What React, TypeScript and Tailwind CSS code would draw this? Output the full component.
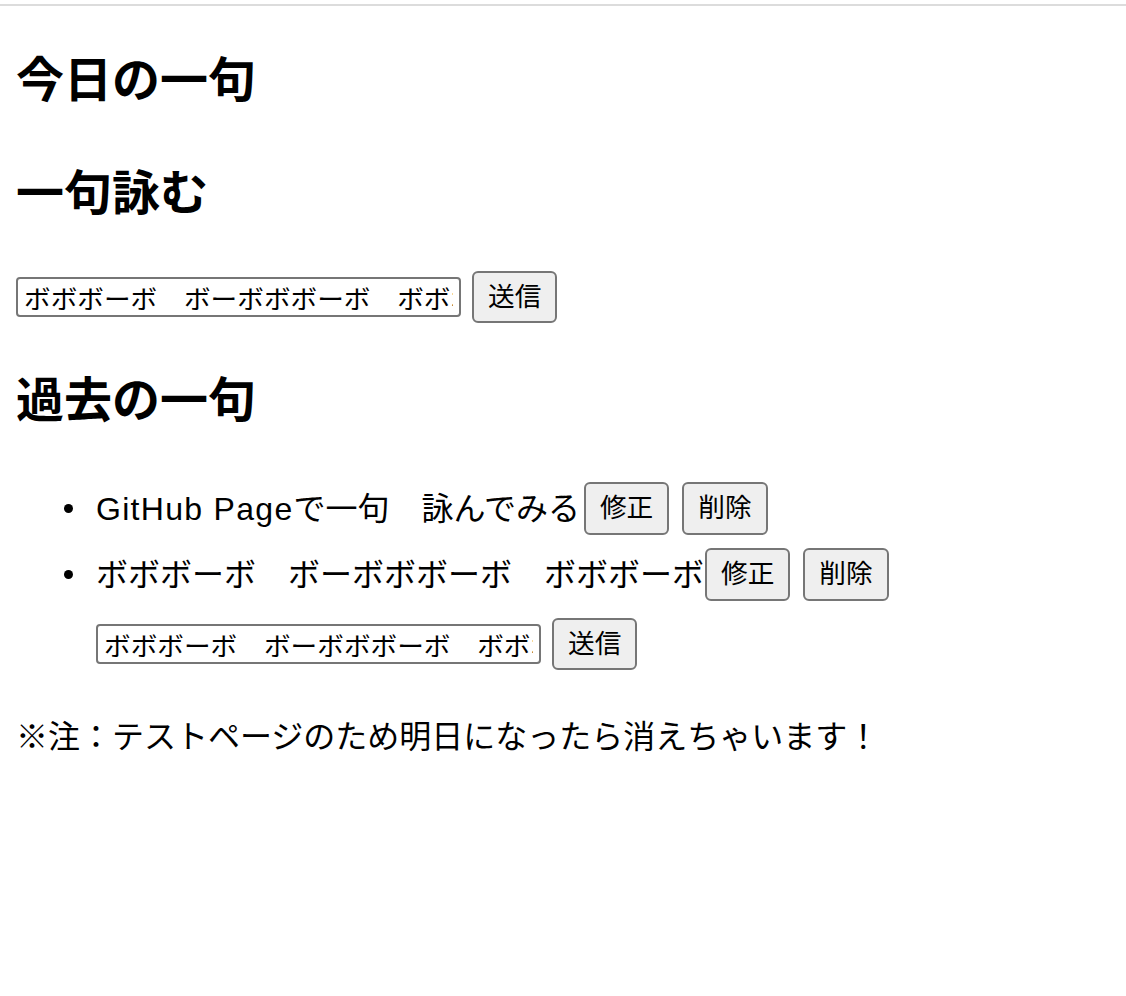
import { useState } from 'react';

// Haiku of the day page — plain browser-default look at 2x scale.

const FONT = "font-['Liberation_Sans','Noto_Sans_CJK_JP',sans-serif]";

interface Haiku {
  id: number;
  latin?: string;
  text: string;
}

const initialHaiku: Haiku[] = [
  { id: 1, latin: 'GitHub Page', text: 'で一句　詠んでみる' },
  { id: 2, text: 'ボボボーボ　ボーボボボーボ　ボボボーボ' },
];

function Button({ label }: { label: string }) {
  return (
    <button
      type="button"
      className="h-[53px] shrink-0 rounded-[6px] border-2 border-[#767676] bg-[#efefef] px-[14px] text-[26.67px] leading-none text-black"
    >
      {label}
    </button>
  );
}

function HaikuInput({ initial }: { initial: string }) {
  const [value, setValue] = useState(initial);
  return (
    <div className="flex h-[52px] items-center">
      <input
        type="text"
        value={value}
        onChange={(e) => setValue(e.target.value)}
        className="h-[40px] w-[445px] rounded-[4px] border-2 border-[#767676] bg-white px-[6px] text-[26.67px] text-black outline-none"
      />
      <div className="ml-[11px] flex h-[52px] items-center">
        <button
          type="button"
          className="h-[52px] rounded-[6px] border-2 border-[#767676] bg-[#efefef] px-[14px] text-[26.67px] leading-none text-black"
        >
          送信
        </button>
      </div>
    </div>
  );
}

export default function App() {
  const [items] = useState(initialHaiku);

  return (
    <div className={`${FONT} min-h-[996px] bg-white text-black`}>
      <div className="mt-[4px] h-[2px] bg-[#dcdcdc]" />

      <div className="px-[16px]">
        <h2 className="mt-[39px] h-[72px] text-[48px] font-bold leading-[72px]">今日の一句</h2>

        <h2 className="mt-[41px] h-[72px] text-[48px] font-bold leading-[72px]">一句詠む</h2>

        <div className="mt-[41px]">
          <HaikuInput initial="ボボボーボ　ボーボボボーボ　ボボボーボ" />
        </div>

        <h2 className="mt-[42px] h-[72px] text-[48px] font-bold leading-[72px]">過去の一句</h2>

        <ul className="mt-[45px] pl-[48px]">
          {items.map((item, i) => (
            <li key={item.id} className={i === 0 ? '' : 'mt-[13px]'}>
              <div className="flex h-[53px] items-center">
                <span className="mr-[23px] h-[9px] w-[9px] shrink-0 rounded-full bg-black" />
                <span className="whitespace-nowrap text-[32px] leading-[48px]">
                  {item.latin && <span className="tracking-[1.3px]">{item.latin}</span>}
                  {item.text}
                </span>
                <div className={item.latin ? 'ml-[4px]' : 'ml-[1px]'}>
                  <Button label="修正" />
                </div>
                <div className="ml-[13px]">
                  <Button label="削除" />
                </div>
              </div>
              {i === items.length - 1 && (
                <div className="mt-[17px] pl-[32px]">
                  <HaikuInput initial="ボボボーボ　ボーボボボーボ　ボボボーボ" />
                </div>
              )}
            </li>
          ))}
        </ul>

        <p className="mt-[43px] text-[32px] leading-[48px]">
          ※注：テストページのため明日になったら消えちゃいます！
        </p>
      </div>
    </div>
  );
}
